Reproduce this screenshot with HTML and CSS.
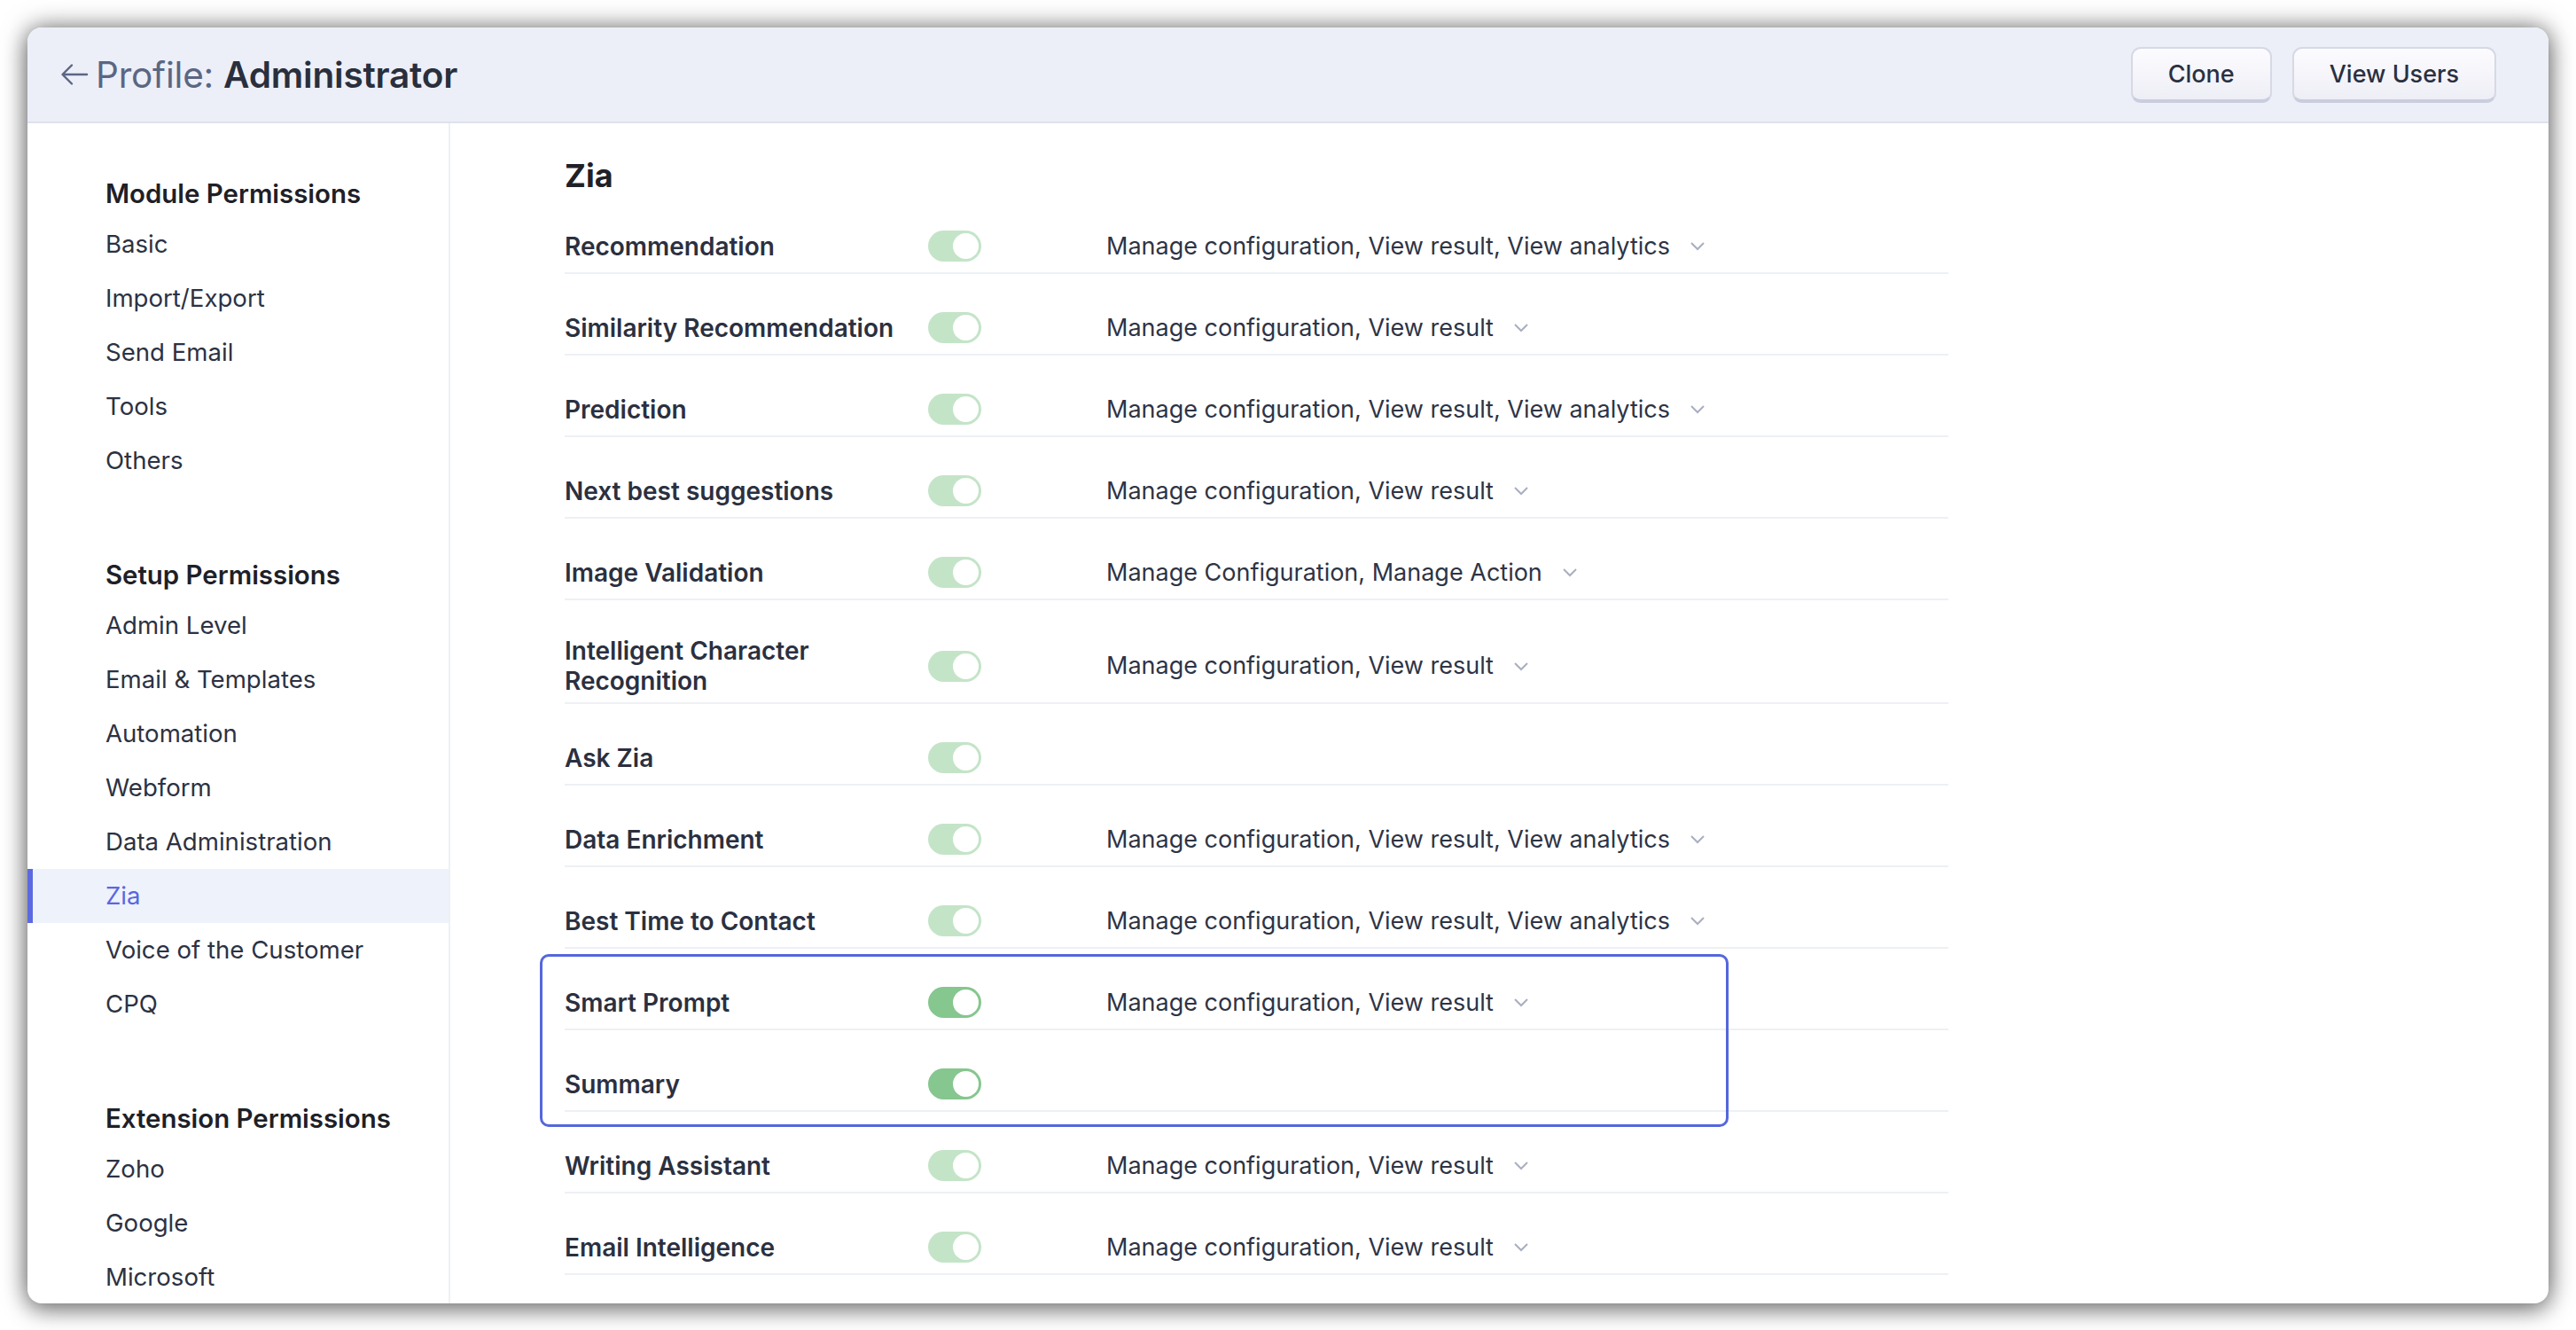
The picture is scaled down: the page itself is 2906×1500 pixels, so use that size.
FILE: index.html
```html
<!DOCTYPE html>
<html lang="en">
<head>
    <meta charset="UTF-8">
    <title>Profile: Administrator</title>
    <link rel="stylesheet" href="styles.css">
</head>
<body>
<div class="page">
    <div class="card">

        <div class="topbar">
            <div class="title">
                <svg class="back" width="32" height="26" viewBox="0 0 32 26">
                    <path d="M30 13H3M13 2.5L2.5 13L13 23.5" fill="none" stroke="#5b6683" stroke-width="2.4" stroke-linecap="round" stroke-linejoin="round"/>
                </svg>
                <span class="profile">Profile:</span>
                <span class="name">Administrator</span>
            </div>
            <div class="actions">
                <button class="btn">Clone</button>
                <button class="btn">View Users</button>
            </div>
        </div>

        <div class="content">
            <div class="sidebar">
                <div class="nav-group">
                    <div class="nav-title">Module Permissions</div>
                    <div class="nav-item">Basic</div>
                    <div class="nav-item">Import/Export</div>
                    <div class="nav-item">Send Email</div>
                    <div class="nav-item">Tools</div>
                    <div class="nav-item">Others</div>
                </div>
                <div class="nav-group">
                    <div class="nav-title">Setup Permissions</div>
                    <div class="nav-item">Admin Level</div>
                    <div class="nav-item">Email &amp; Templates</div>
                    <div class="nav-item">Automation</div>
                    <div class="nav-item">Webform</div>
                    <div class="nav-item">Data Administration</div>
                    <div class="nav-item active">Zia</div>
                    <div class="nav-item">Voice of the Customer</div>
                    <div class="nav-item">CPQ</div>
                </div>
                <div class="nav-group">
                    <div class="nav-title">Extension Permissions</div>
                    <div class="nav-item">Zoho</div>
                    <div class="nav-item">Google</div>
                    <div class="nav-item">Microsoft</div>
                </div>
            </div>

            <div class="main">
                <h2 class="section-title">Zia</h2>
                <div class="perm-table">
                    <div class="row">
                        <div class="label">Recommendation</div>
                        <span class="switch"><span class="knob"></span></span>
                        <div class="perms">Manage configuration, View result, View analytics <svg class="chev" width="18" height="11" viewBox="0 0 18 11"><path d="M2 2l7 7 7-7" fill="none" stroke="#a9aec0" stroke-width="2"/></svg></div>
                    </div>
                    <div class="row">
                        <div class="label">Similarity Recommendation</div>
                        <span class="switch"><span class="knob"></span></span>
                        <div class="perms">Manage configuration, View result <svg class="chev" width="18" height="11" viewBox="0 0 18 11"><path d="M2 2l7 7 7-7" fill="none" stroke="#a9aec0" stroke-width="2"/></svg></div>
                    </div>
                    <div class="row">
                        <div class="label">Prediction</div>
                        <span class="switch"><span class="knob"></span></span>
                        <div class="perms">Manage configuration, View result, View analytics <svg class="chev" width="18" height="11" viewBox="0 0 18 11"><path d="M2 2l7 7 7-7" fill="none" stroke="#a9aec0" stroke-width="2"/></svg></div>
                    </div>
                    <div class="row">
                        <div class="label">Next best suggestions</div>
                        <span class="switch"><span class="knob"></span></span>
                        <div class="perms">Manage configuration, View result <svg class="chev" width="18" height="11" viewBox="0 0 18 11"><path d="M2 2l7 7 7-7" fill="none" stroke="#a9aec0" stroke-width="2"/></svg></div>
                    </div>
                    <div class="row">
                        <div class="label">Image Validation</div>
                        <span class="switch"><span class="knob"></span></span>
                        <div class="perms">Manage Configuration, Manage Action <svg class="chev" width="18" height="11" viewBox="0 0 18 11"><path d="M2 2l7 7 7-7" fill="none" stroke="#a9aec0" stroke-width="2"/></svg></div>
                    </div>
                    <div class="row tall">
                        <div class="label">Intelligent Character Recognition</div>
                        <span class="switch"><span class="knob"></span></span>
                        <div class="perms">Manage configuration, View result <svg class="chev" width="18" height="11" viewBox="0 0 18 11"><path d="M2 2l7 7 7-7" fill="none" stroke="#a9aec0" stroke-width="2"/></svg></div>
                    </div>
                    <div class="row">
                        <div class="label">Ask Zia</div>
                        <span class="switch"><span class="knob"></span></span>
                    </div>
                    <div class="row">
                        <div class="label">Data Enrichment</div>
                        <span class="switch"><span class="knob"></span></span>
                        <div class="perms">Manage configuration, View result, View analytics <svg class="chev" width="18" height="11" viewBox="0 0 18 11"><path d="M2 2l7 7 7-7" fill="none" stroke="#a9aec0" stroke-width="2"/></svg></div>
                    </div>
                    <div class="row">
                        <div class="label">Best Time to Contact</div>
                        <span class="switch"><span class="knob"></span></span>
                        <div class="perms">Manage configuration, View result, View analytics <svg class="chev" width="18" height="11" viewBox="0 0 18 11"><path d="M2 2l7 7 7-7" fill="none" stroke="#a9aec0" stroke-width="2"/></svg></div>
                    </div>

                    <div class="highlight">
                        <div class="row">
                            <div class="label">Smart Prompt</div>
                            <span class="switch on"><span class="knob"></span></span>
                            <div class="perms">Manage configuration, View result <svg class="chev" width="18" height="11" viewBox="0 0 18 11"><path d="M2 2l7 7 7-7" fill="none" stroke="#a9aec0" stroke-width="2"/></svg></div>
                        </div>
                        <div class="row">
                            <div class="label">Summary</div>
                            <span class="switch on"><span class="knob"></span></span>
                        </div>
                    </div>

                    <div class="row">
                        <div class="label">Writing Assistant</div>
                        <span class="switch"><span class="knob"></span></span>
                        <div class="perms">Manage configuration, View result <svg class="chev" width="18" height="11" viewBox="0 0 18 11"><path d="M2 2l7 7 7-7" fill="none" stroke="#a9aec0" stroke-width="2"/></svg></div>
                    </div>
                    <div class="row">
                        <div class="label">Email Intelligence</div>
                        <span class="switch"><span class="knob"></span></span>
                        <div class="perms">Manage configuration, View result <svg class="chev" width="18" height="11" viewBox="0 0 18 11"><path d="M2 2l7 7 7-7" fill="none" stroke="#a9aec0" stroke-width="2"/></svg></div>
                    </div>
                </div>
            </div>
        </div>

    </div>
</div>
</body>
</html>
```

FILE: styles.css
```css
* {
    box-sizing: border-box;
}
body {
    margin: 0;
    padding: 0;
    background-color: #ffffff;
    font-family: Inter, "Noto Sans", sans-serif;
    color: #2c3243;
}
.page {
    width: 2906px;
    height: 1500px;
    padding: 31px 31px 30px;
}
.card {
    height: 100%;
    display: flex;
    flex-direction: column;
    background-color: #ffffff;
    border-radius: 16px;
    overflow: hidden;
    box-shadow: 0 0 28px rgba(0,0,0,0.55), 0 10px 24px rgba(0,0,0,0.25);
}

/* header */
.topbar {
    flex: none;
    height: 108px;
    display: flex;
    align-items: center;
    justify-content: space-between;
    padding: 0 59px 0 37px;
    background-color: #eceff8;
    border-bottom: 2px solid #dde1ec;
}
.title {
    display: flex;
    align-items: center;
    font-size: 40.5px;
    letter-spacing: -0.2px;
}
.back {
    margin-right: 8px;
}
.profile {
    color: #5b6683;
    margin-right: 11px;
}
.name {
    font-weight: 600;
    color: #2a2f3d;
}
.actions {
    display: flex;
    gap: 23px;
}
.btn {
    height: 63px;
    padding: 0 40px;
    font-family: Inter, sans-serif;
    font-size: 27px;
    font-weight: 500;
    color: #2a3040;
    background: linear-gradient(#fcfcff, #eeeef6);
    border: 2px solid #d6d9e5;
    border-bottom: 4px solid #cacddd;
    border-radius: 11px;
    cursor: pointer;
}

/* body */
.content {
    flex: 1;
    display: flex;
    min-height: 0;
}
.sidebar {
    flex: none;
    width: 477px;
    padding-top: 60px;
    border-right: 2px solid #eef0f5;
}
.nav-group + .nav-group {
    margin-top: 79px;
}
.nav-title {
    padding-left: 88px;
    font-size: 29.4px;
    font-weight: 600;
    line-height: 40px;
    color: #1e2027;
    margin-bottom: 6px;
}
.nav-item {
    height: 61px;
    line-height: 61px;
    padding-left: 88px;
    font-size: 27.6px;
    color: #2c3243;
}
.nav-item.active {
    color: #5a67e0;
    background-color: #eef2fb;
    box-shadow: inset 6px 0 0 #5b6ae0;
}

.main {
    flex: 1;
    padding: 40px 0 0 129px;
}
.section-title {
    margin: 0;
    font-size: 36px;
    font-weight: 700;
    line-height: 38px;
    color: #1f2128;
}
.perm-table {
    width: 1561px;
}
.row {
    display: flex;
    align-items: center;
    padding: 43px 0 12px;
    border-bottom: 2px solid #edf0f5;
}
.row.tall {
    padding: 40px 0 7px;
}
.label {
    flex: none;
    width: 410px;
    padding-right: 14px;
    font-size: 28px;
    font-weight: 600;
    line-height: 34px;
    color: #2b3040;
}
.switch {
    flex: none;
    width: 60px;
    height: 35px;
    display: flex;
    align-items: center;
    justify-content: flex-end;
    padding-right: 3px;
    border-radius: 18px;
    background-color: #c4e4c8;
    margin-right: 141px;
}
.switch.on {
    background-color: #86c68f;
}
.knob {
    width: 29px;
    height: 29px;
    border-radius: 50%;
    background-color: #ffffff;
}
.perms {
    display: flex;
    align-items: center;
    font-size: 27px;
    line-height: 34px;
    color: #2e3445;
}
.chev {
    margin-left: 22px;
}

/* annotation box round Smart Prompt + Summary */
.highlight {
    position: relative;
}
.highlight::after {
    content: "";
    position: absolute;
    top: 6px;
    bottom: -17px;
    left: -28px;
    right: 248px;
    border: 3px solid #5467dc;
    border-radius: 10px;
    pointer-events: none;
}
```
